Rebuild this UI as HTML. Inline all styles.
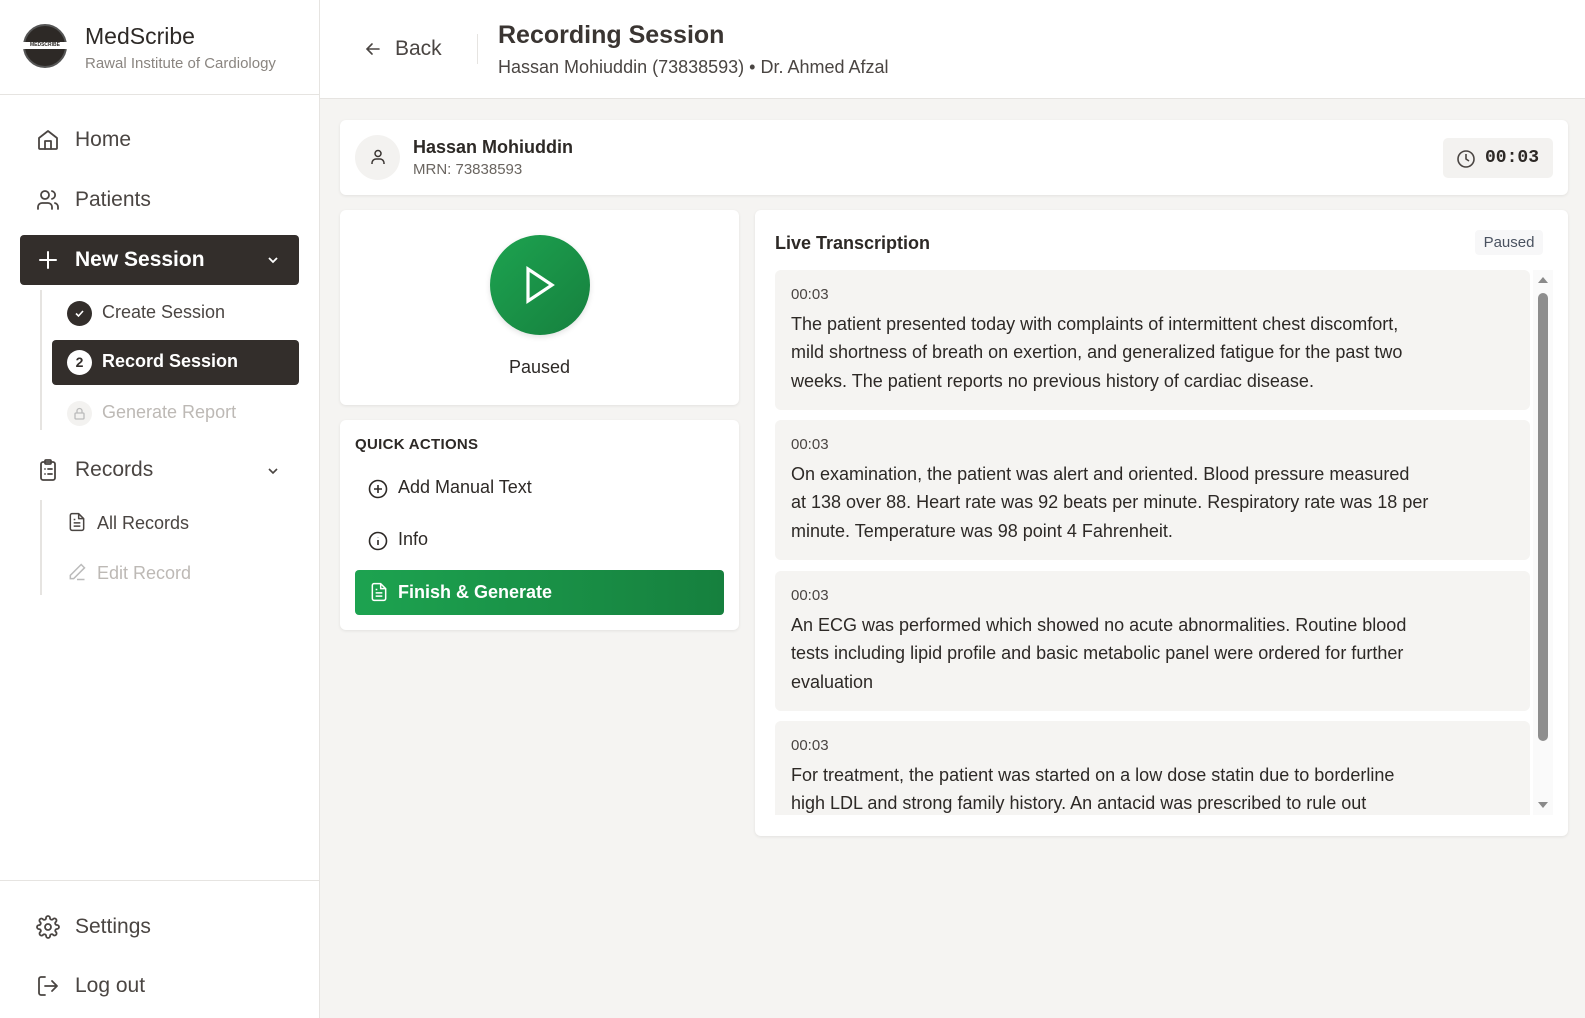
<!DOCTYPE html>
<html><head><meta charset="utf-8"><style>
*{box-sizing:border-box;margin:0;padding:0}
body{width:1585px;height:1018px;overflow:hidden;background:#f5f4f2;font-family:"Liberation Sans",sans-serif;color:#2d2926;position:relative}
.abs{position:absolute}
.side{left:0;top:0;width:320px;height:1018px;background:#fff;border-right:1px solid #e6e4e1}
.nav{position:absolute;display:flex;align-items:center;font-size:21px;color:#4a4542}
.nav svg{width:24px;height:24px;fill:none;stroke:#4a4542;stroke-width:1.8;stroke-linecap:round;stroke-linejoin:round}
.card{position:absolute;background:#fff;border-radius:6px;box-shadow:0 1px 3px rgba(0,0,0,.08)}
.item{position:absolute;left:20px;width:755px;background:#f5f4f2;border-radius:6px;padding:16px 16px 0 16px;overflow:hidden}
.item .t{font-size:15px;color:#4a4542;line-height:18px;margin-bottom:6px}
.item .x{font-size:18px;line-height:28.3px;color:#2d2926;white-space:nowrap}
</style></head><body>
<div class="abs side"></div>
<!-- logo -->
<div class="abs" style="left:23px;top:24px;width:44px;height:44px;border-radius:50%;background:#2d2926;border:2px solid #555"></div>
<div class="abs" style="left:23px;top:42px;width:44px;height:7px;background:#fff;font-size:5px;color:#2d2926;text-align:center;line-height:7px;font-weight:bold">MEDSCRIBE</div>
<div class="abs" style="left:85px;top:23px;font-size:23px;color:#2d2926">MedScribe</div>
<div class="abs" style="left:85px;top:55px;font-size:15px;color:#8a8580">Rawal Institute of Cardiology</div>
<div class="abs" style="left:0;top:94px;width:319px;height:1px;background:#e6e4e1"></div>

<div class="nav" style="left:36px;top:128px"><svg viewBox="0 0 24 24"><path d="M3 10l9-7 9 7v10a1 1 0 0 1-1 1H4a1 1 0 0 1-1-1z"/><path d="M9 21v-8h6v8"/></svg><span style="margin-left:15px">Home</span></div>
<div class="nav" style="left:36px;top:188px"><svg viewBox="0 0 24 24"><circle cx="9" cy="7" r="4"/><path d="M2 21v-2a4 4 0 0 1 4-4h6a4 4 0 0 1 4 4v2"/><path d="M16 3.1a4 4 0 0 1 0 7.8M22 21v-2a4 4 0 0 0-3-3.9"/></svg><span style="margin-left:15px">Patients</span></div>

<div class="abs" style="left:20px;top:235px;width:279px;height:50px;background:#332e2b;border-radius:4px"></div>
<div class="nav" style="left:36px;top:248px;color:#fff;font-weight:bold"><svg viewBox="0 0 24 24" style="stroke:#fff;stroke-width:2"><path d="M12 4v16M4 12h16"/></svg><span style="margin-left:15px">New Session</span></div>
<svg class="abs" style="left:266px;top:253px" width="14" height="14" viewBox="0 0 14 14"><path d="M3 5l4 4 4-4" fill="none" stroke="#fff" stroke-width="1.8"/></svg>

<div class="abs" style="left:40px;top:290px;width:2px;height:140px;background:#e6e4e1"></div>
<div class="abs" style="left:67px;top:301px;width:25px;height:25px;border-radius:50%;background:#332e2b"></div>
<svg class="abs" style="left:73px;top:307px" width="13" height="13" viewBox="0 0 13 13"><path d="M3 6.5l2.5 2.5 4.5-5" fill="none" stroke="#fff" stroke-width="1.6"/></svg>
<div class="abs" style="left:102px;top:302px;font-size:18px;color:#4a4542">Create Session</div>
<div class="abs" style="left:52px;top:340px;width:247px;height:45px;background:#332e2b;border-radius:4px"></div>
<div class="abs" style="left:67px;top:350px;width:25px;height:25px;border-radius:50%;background:#fff;color:#332e2b;font-size:14px;font-weight:bold;text-align:center;line-height:25px">2</div>
<div class="abs" style="left:102px;top:351px;font-size:18px;color:#fff;font-weight:bold">Record Session</div>
<div class="abs" style="left:67px;top:401px;width:25px;height:25px;border-radius:50%;background:#f3f2f0"></div>
<svg class="abs" style="left:72px;top:406px" width="15" height="15" viewBox="0 0 15 15"><rect x="3" y="7" width="9" height="6" rx="1" fill="none" stroke="#bbb" stroke-width="1.3"/><path d="M5 7V5a2.5 2.5 0 0 1 5 0v2" fill="none" stroke="#bbb" stroke-width="1.3"/></svg>
<div class="abs" style="left:102px;top:402px;font-size:18px;color:#bdb9b5">Generate Report</div>

<div class="nav" style="left:36px;top:458px"><svg viewBox="0 0 24 24"><rect x="5" y="4" width="14" height="18" rx="2"/><rect x="9" y="2" width="6" height="4" rx="1"/><path d="M9 11h.01M12 11h4M9 16h.01M12 16h4"/></svg><span style="margin-left:15px">Records</span></div>
<svg class="abs" style="left:266px;top:464px" width="14" height="14" viewBox="0 0 14 14"><path d="M3 5l4 4 4-4" fill="none" stroke="#4a4542" stroke-width="1.6"/></svg>
<div class="abs" style="left:40px;top:500px;width:2px;height:95px;background:#e6e4e1"></div>
<svg class="abs" style="left:67px;top:512px" width="20" height="20" viewBox="0 0 24 24" fill="none" stroke="#4a4542" stroke-width="1.8" stroke-linejoin="round"><path d="M14 2H6a2 2 0 0 0-2 2v16a2 2 0 0 0 2 2h12a2 2 0 0 0 2-2V8z"/><path d="M14 2v6h6M8 13h8M8 17h8M8 9h2"/></svg>
<div class="abs" style="left:97px;top:513px;font-size:18px;color:#4a4542">All Records</div>
<svg class="abs" style="left:67px;top:562px" width="20" height="20" viewBox="0 0 24 24" fill="none" stroke="#bbb" stroke-width="1.8"><path d="M17 3l4 4L8 20H4v-4z"/><path d="M12 21h9"/></svg>
<div class="abs" style="left:97px;top:563px;font-size:18px;color:#bdb9b5">Edit Record</div>

<div class="abs" style="left:0;top:880px;width:319px;height:1px;background:#e6e4e1"></div>
<div class="nav" style="left:36px;top:915px"><svg viewBox="0 0 24 24"><circle cx="12" cy="12" r="3"/><path d="M19.4 15a1.7 1.7 0 0 0 .3 1.8l.1.1a2 2 0 1 1-2.8 2.8l-.1-.1a1.7 1.7 0 0 0-1.8-.3 1.7 1.7 0 0 0-1 1.5V21a2 2 0 1 1-4 0v-.1a1.7 1.7 0 0 0-1.1-1.5 1.7 1.7 0 0 0-1.8.3l-.1.1a2 2 0 1 1-2.8-2.8l.1-.1a1.7 1.7 0 0 0 .3-1.8 1.7 1.7 0 0 0-1.5-1H3a2 2 0 1 1 0-4h.1a1.7 1.7 0 0 0 1.5-1.100 1.7 1.7 0 0 0-.3-1.8l-.1-.1a2 2 0 1 1 2.8-2.8l.1.1a1.7 1.7 0 0 0 1.8.3H9a1.7 1.7 0 0 0 1-1.5V3a2 2 0 1 1 4 0v.1a1.7 1.7 0 0 0 1 1.5 1.7 1.7 0 0 0 1.8-.3l.1-.1a2 2 0 1 1 2.8 2.8l-.1.1a1.7 1.7 0 0 0-.3 1.8V9a1.7 1.7 0 0 0 1.5 1H21a2 2 0 1 1 0 4h-.1a1.7 1.7 0 0 0-1.5 1z"/></svg><span style="margin-left:15px">Settings</span></div>
<div class="nav" style="left:36px;top:974px"><svg viewBox="0 0 24 24"><path d="M9 21H5a2 2 0 0 1-2-2V5a2 2 0 0 1 2-2h4M16 17l5-5-5-5M21 12H9"/></svg><span style="margin-left:15px">Log out</span></div>

<!-- header -->
<div class="abs" style="left:320px;top:0;width:1265px;height:99px;background:#fff;border-bottom:1px solid #e6e4e1"></div>
<svg class="abs" style="left:364px;top:40px" width="18" height="18" viewBox="0 0 18 18" fill="none" stroke="#4a4542" stroke-width="1.6" stroke-linecap="round"><path d="M15 9H3M8 4L3 9l5 5"/></svg>
<div class="abs" style="left:395px;top:37px;font-size:21px;color:#4a4542">Back</div>
<div class="abs" style="left:477px;top:34px;width:1px;height:30px;background:#e6e4e1"></div>
<div class="abs" style="left:498px;top:21px;font-size:25px;font-weight:bold;color:#3a3532">Recording Session</div>
<div class="abs" style="left:498px;top:57px;font-size:18px;color:#4a4542">Hassan Mohiuddin (73838593) • Dr. Ahmed Afzal</div>

<!-- patient card -->
<div class="card" style="left:340px;top:120px;width:1228px;height:75px"></div>
<div class="abs" style="left:355px;top:135px;width:45px;height:45px;border-radius:50%;background:#f3f2f0"></div>
<svg class="abs" style="left:369px;top:148px" width="18" height="18" viewBox="0 0 18 18" fill="none" stroke="#3a3532" stroke-width="1.5"><circle cx="9" cy="5.5" r="3"/><path d="M3 16v-1a4 4 0 0 1 4-4h4a4 4 0 0 1 4 4v1"/></svg>
<div class="abs" style="left:413px;top:137px;font-size:18px;font-weight:bold;color:#2d2926">Hassan Mohiuddin</div>
<div class="abs" style="left:413px;top:161px;font-size:15px;color:#6a6560">MRN: 73838593</div>
<div class="abs" style="left:1443px;top:138px;width:110px;height:40px;background:#f3f2f0;border-radius:5px"></div>
<svg class="abs" style="left:1456px;top:149px" width="20" height="20" viewBox="0 0 20 20" fill="none" stroke="#4a4542" stroke-width="1.6"><circle cx="10" cy="10" r="8"/><path d="M10 5v5l3 2"/></svg>
<div class="abs" style="left:1485px;top:148px;font-size:18px;font-weight:bold;font-family:'Liberation Mono',monospace;color:#2d2926">00:03</div>

<!-- recorder card -->
<div class="card" style="left:340px;top:210px;width:399px;height:195px"></div>
<div class="abs" style="left:490px;top:235px;width:100px;height:100px;border-radius:50%;background:linear-gradient(135deg,#1da350,#16803e);box-shadow:0 2px 6px rgba(0,0,0,.12)"></div>
<svg class="abs" style="left:520px;top:265px" width="40" height="40" viewBox="0 0 40 40"><path d="M8 4l24 16-24 16z" fill="none" stroke="#fff" stroke-width="3.2" stroke-linejoin="miter"/></svg>
<div class="abs" style="left:340px;top:357px;width:399px;text-align:center;font-size:18px;color:#2d2926">Paused</div>

<!-- quick actions -->
<div class="card" style="left:340px;top:420px;width:399px;height:210px"></div>
<div class="abs" style="left:355px;top:436px;font-size:15px;font-weight:bold;color:#2d2926;letter-spacing:.3px">QUICK ACTIONS</div>
<svg class="abs" style="left:368px;top:479px" width="20" height="20" viewBox="0 0 20 20" fill="none" stroke="#2d2926" stroke-width="1.6"><circle cx="10" cy="10" r="8.5"/><path d="M10 6v8M6 10h8"/></svg>
<div class="abs" style="left:398px;top:477px;font-size:18px;color:#2d2926">Add Manual Text</div>
<svg class="abs" style="left:368px;top:531px" width="20" height="20" viewBox="0 0 20 20" fill="none" stroke="#2d2926" stroke-width="1.6"><circle cx="10" cy="10" r="8.5"/><path d="M10 9v5M10 6.2v.3"/></svg>
<div class="abs" style="left:398px;top:529px;font-size:18px;color:#2d2926">Info</div>
<div class="abs" style="left:355px;top:570px;width:369px;height:45px;border-radius:4px;background:linear-gradient(90deg,#1da350,#16803e)"></div>
<svg class="abs" style="left:369px;top:582px" width="20" height="20" viewBox="0 0 24 24" fill="none" stroke="#fff" stroke-width="1.8" stroke-linejoin="round"><path d="M14 2H6a2 2 0 0 0-2 2v16a2 2 0 0 0 2 2h12a2 2 0 0 0 2-2V8z"/><path d="M14 2v6h6M8 13h8M8 17h8M8 9h2"/></svg>
<div class="abs" style="left:398px;top:582px;font-size:18px;font-weight:bold;color:#fff">Finish &amp; Generate</div>

<!-- transcription -->
<div class="card" style="left:755px;top:210px;width:813px;height:626px">
 <div class="abs" style="left:20px;top:23px;font-size:18px;font-weight:bold;color:#2d2926">Live Transcription</div>
 <div class="abs" style="left:720px;top:20px;width:68px;height:25px;background:#f7f7f8;border-radius:4px;font-size:15px;color:#4a5260;text-align:center;line-height:25px">Paused</div>
 <div class="abs" style="left:20px;top:60px;width:778px;height:545px;overflow:hidden">
  <div class="item" style="left:0;top:0;height:140px"><div class="t">00:03</div><div class="x">The patient presented today with complaints of intermittent chest discomfort,<br>mild shortness of breath on exertion, and generalized fatigue for the past two<br>weeks. The patient reports no previous history of cardiac disease.</div></div>
  <div class="item" style="left:0;top:150px;height:140px"><div class="t">00:03</div><div class="x">On examination, the patient was alert and oriented. Blood pressure measured<br>at 138 over 88. Heart rate was 92 beats per minute. Respiratory rate was 18 per<br>minute. Temperature was 98 point 4 Fahrenheit.</div></div>
  <div class="item" style="left:0;top:301px;height:140px"><div class="t">00:03</div><div class="x">An ECG was performed which showed no acute abnormalities. Routine blood<br>tests including lipid profile and basic metabolic panel were ordered for further<br>evaluation</div></div>
  <div class="item" style="left:0;top:451px;height:140px"><div class="t">00:03</div><div class="x">For treatment, the patient was started on a low dose statin due to borderline<br>high LDL and strong family history. An antacid was prescribed to rule out</div></div>
  <div class="abs" style="left:758px;top:0;width:20px;height:545px;background:#fafafa"></div>
  <svg class="abs" style="left:762px;top:4px" width="12" height="10"><path d="M1 9L6 3l5 6z" fill="#8a8a8a"/></svg>
  <div class="abs" style="left:763px;top:23px;width:10px;height:448px;border-radius:5px;background:#8e8e8e"></div>
  <svg class="abs" style="left:762px;top:531px" width="12" height="10"><path d="M1 1h10L6 7z" fill="#8a8a8a"/></svg>
 </div>
</div>
</body></html>
